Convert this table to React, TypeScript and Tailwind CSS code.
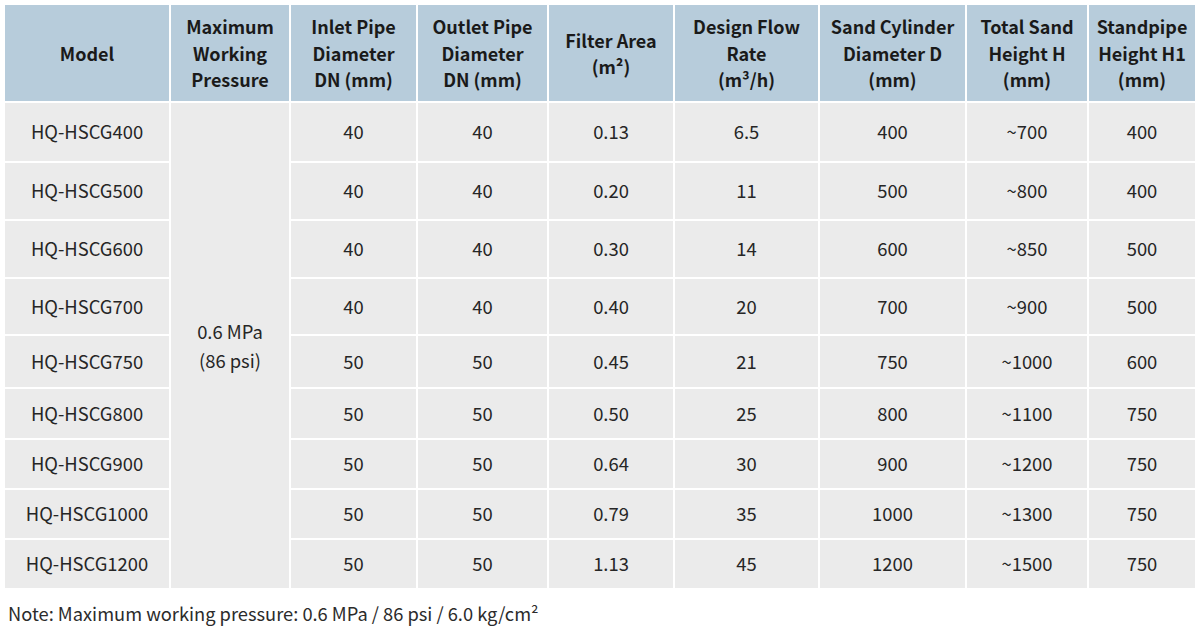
import React from 'react';

type Row = {
    model: string;
    inlet: string;
    outlet: string;
    area: string;
    flow: string;
    diameter: string;
    sand: string;
    standpipe: string;
};

const rows: Row[] = [
    { model: 'HQ-HSCG400', inlet: '40', outlet: '40', area: '0.13', flow: '6.5', diameter: '400', sand: '~700', standpipe: '400' },
    { model: 'HQ-HSCG500', inlet: '40', outlet: '40', area: '0.20', flow: '11', diameter: '500', sand: '~800', standpipe: '400' },
    { model: 'HQ-HSCG600', inlet: '40', outlet: '40', area: '0.30', flow: '14', diameter: '600', sand: '~850', standpipe: '500' },
    { model: 'HQ-HSCG700', inlet: '40', outlet: '40', area: '0.40', flow: '20', diameter: '700', sand: '~900', standpipe: '500' },
    { model: 'HQ-HSCG750', inlet: '50', outlet: '50', area: '0.45', flow: '21', diameter: '750', sand: '~1000', standpipe: '600' },
    { model: 'HQ-HSCG800', inlet: '50', outlet: '50', area: '0.50', flow: '25', diameter: '800', sand: '~1100', standpipe: '750' },
    { model: 'HQ-HSCG900', inlet: '50', outlet: '50', area: '0.64', flow: '30', diameter: '900', sand: '~1200', standpipe: '750' },
    { model: 'HQ-HSCG1000', inlet: '50', outlet: '50', area: '0.79', flow: '35', diameter: '1000', sand: '~1300', standpipe: '750' },
    { model: 'HQ-HSCG1200', inlet: '50', outlet: '50', area: '1.13', flow: '45', diameter: '1200', sand: '~1500', standpipe: '750' },
];

const headers: string[][] = [
    ['Model'],
    ['Maximum', 'Working', 'Pressure'],
    ['Inlet Pipe', 'Diameter', 'DN (mm)'],
    ['Outlet Pipe', 'Diameter', 'DN (mm)'],
    ['Filter Area', '(m²)'],
    ['Design Flow', 'Rate', '(m³/h)'],
    ['Sand Cylinder', 'Diameter D', '(mm)'],
    ['Total Sand', 'Height H', '(mm)'],
    ['Standpipe', 'Height H1', '(mm)'],
];

const Cell: React.FC<{ children: React.ReactNode; className?: string }> = ({ children, className = '' }) => (
    <div className={`flex items-center justify-center bg-[#ebebeb] text-center ${className}`}>
        {children}
    </div>
);

export default function App() {
    return (
        <div
            className="h-[638px] w-[1200px] bg-white px-[5px] pt-[5px] text-[#262626]"
            style={{ fontFamily: '"Noto Sans CJK SC", "Noto Sans", sans-serif' }}
        >
            <div className="grid grid-cols-[164px_118px_125px_129px_124px_143px_145px_120px_106px] grid-rows-[96px_58px_56px_56px_55px_51px_49px_48px_48px_48px] gap-[2px] text-[18.4px]">
                {headers.map((lines, i) => (
                    <div
                        key={i}
                        className="flex flex-col items-center justify-center bg-[#b7ccdb] text-center text-[18px] font-semibold leading-[26.5px] text-[#1a1a1a]"
                    >
                        {lines.map((l) => (
                            <span key={l}>{l}</span>
                        ))}
                    </div>
                ))}
                {rows.map((r, i) => (
                    <React.Fragment key={r.model}>
                        <Cell>{r.model}</Cell>
                        {i === 0 && (
                            <Cell className="row-span-9 flex-col leading-[29px]">
                                <span>0.6 MPa</span>
                                <span>(86 psi)</span>
                            </Cell>
                        )}
                        <Cell>{r.inlet}</Cell>
                        <Cell>{r.outlet}</Cell>
                        <Cell>{r.area}</Cell>
                        <Cell>{r.flow}</Cell>
                        <Cell>{r.diameter}</Cell>
                        <Cell>{r.sand}</Cell>
                        <Cell>{r.standpipe}</Cell>
                    </React.Fragment>
                ))}
            </div>
            <p className="mt-[12px] pl-[3px] text-[18.3px] text-[#2b2b2b]">
                Note: Maximum working pressure: 0.6 MPa / 86 psi / 6.0 kg/cm²
            </p>
        </div>
    );
}
